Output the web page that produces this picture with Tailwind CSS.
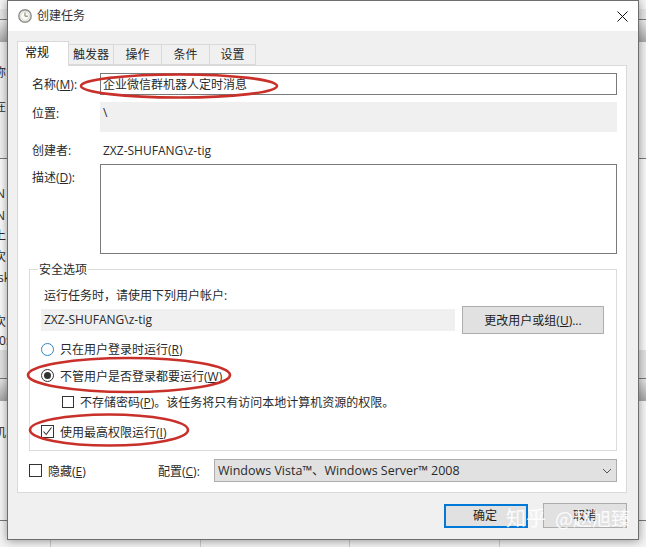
<!DOCTYPE html>
<html lang="zh">
<head>
<meta charset="utf-8">
<title>创建任务</title>
<script src="https://cdn.jsdelivr.net/npm/@tailwindcss/browser@4"></script>
</head>
<body class="m-0 bg-[#f0f0f0]">
<div class="relative w-[646px] h-[547px] overflow-hidden font-['Open_Sans','Noto_Sans_CJK_SC',sans-serif] text-[12px] text-[#2a2a2a]">

  <!-- window behind the dialog -->
  <div class="flex flex-col h-[547px]">
    <div class="h-[9px] bg-[#f4f4f4]"></div>
    <div class="h-[10px] bg-[#e6e6e6]"></div>
    <div class="h-[23px] border-t border-[#777] bg-gradient-to-b from-[#eeeeee] to-[#a8a8a8]"></div>
    <div class="h-[116px] bg-[#f0f0f0] pt-[22px] leading-[18px] -indent-[6px]">
      <p>称</p>
      <p class="mt-[16px]">在</p>
    </div>
    <div class="h-[192px] border-t border-[#777] bg-[#fafafa] pt-[26px] leading-[18px] -indent-[4px]">
      <p>N</p>
      <p class="mt-[4px]">N</p>
      <p class="mt-[2px] -indent-[6px]">上</p>
      <p class="mt-[3px] -indent-[6px]">次</p>
      <p class="mt-[3px] -indent-[2px]">sk</p>
      <p class="mt-[26px] -indent-[6px]">次</p>
      <p class="mt-[1px] -indent-[1px]">0:</p>
    </div>
    <div class="h-[28px] bg-[#e2e2e2]"></div>
    <div class="h-[23px] border-t border-[#777] bg-gradient-to-b from-[#e6e6e6] to-[#a5a5a5]"></div>
    <div class="h-[119px] bg-[#f6f6f6] pt-[23px] leading-[18px] -indent-[6px]">
      <p>机</p>
    </div>
    <div class="flex-1 border-t border-[#777] bg-[#f4f4f4] flex">
      <div class="w-[50px]"></div>
      <div class="w-[150px] border-l border-[#ccc]"></div>
      <div class="w-[149px] border-l border-[#ccc]"></div>
      <div class="w-[150px] border-l border-[#ccc]"></div>
      <div class="flex-1 border-l border-[#ccc]"></div>
    </div>
  </div>

  <!-- dialog -->
  <div class="absolute left-[7px] top-0 w-[632px] h-[540px] bg-[#f0f0f0] border border-[#6e6e6e] shadow-[0_1px_9px_rgba(0,0,0,0.4)]">

    <div class="h-[30px] bg-white flex items-center pl-[10px]">
      <svg class="w-[14px] h-[14px]" viewBox="0 0 14 14">
        <circle cx="7" cy="7" r="6.2" fill="#eef0ee" stroke="#8d8f8c" stroke-width="1.4"/>
        <circle cx="7" cy="7" r="4.3" fill="#fbfbf4" stroke="#c9c9bd" stroke-width=".6"/>
        <path d="M7 3.6V7.2H10" fill="none" stroke="#6f7f6c" stroke-width="1"/>
      </svg>
      <span class="ml-[5px] text-[#333]">创建任务</span>
      <svg class="ml-auto mr-[10px] w-[11px] h-[11px]" viewBox="0 0 11 11">
        <path d="M.5.5l10 10M10.5.5l-10 10" stroke="#111" stroke-width="1"/>
      </svg>
    </div>

    <!-- tabs -->
    <div class="flex items-end h-[34px] pl-[9px] relative z-10">
      <div class="w-[52px] h-[25px] -mb-px bg-white border border-b-0 border-[#d9d9d9] pl-[7px] leading-[22px] text-[#111]">常规</div>
      <div class="w-[45px] h-[21px] border-y border-r border-[#d9d9d9] text-center leading-[20px]">触发器</div>
      <div class="w-[48px] h-[21px] border-y border-r border-[#d9d9d9] text-center leading-[20px]">操作</div>
      <div class="w-[48px] h-[21px] border-y border-r border-[#d9d9d9] text-center leading-[20px]">条件</div>
      <div class="w-[46px] h-[21px] border-y border-r border-[#d9d9d9] text-center leading-[20px]">设置</div>
    </div>

    <!-- panel -->
    <div class="ml-[9px] w-[610px] h-[428px] bg-white border border-[#d9d9d9] pl-[11px] pt-[7px]">
      <div class="flex items-center pl-[3px]">
        <label class="w-[68px] pt-[2px]">名称(<u>M</u>):</label>
        <div class="w-[517px] h-[22px] border border-[#7a7a7a] pl-[2px] leading-[22px]">企业微信群机器人定时消息</div>
      </div>
      <div class="flex items-start pl-[3px] mt-[7px]">
        <label class="w-[68px] leading-[24px]">位置:</label>
        <div class="w-[517px] h-[30px] bg-[#f0f0f0] pl-[3px] leading-[22px]">\</div>
      </div>
      <div class="flex items-center pl-[3px] mt-[8px] h-[20px]">
        <label class="w-[71px] pt-[2px]">创建者:</label>
        <span class="pt-[2px]">ZXZ-SHUFANG\z-tig</span>
      </div>
      <div class="flex items-start pl-[3px] mt-[4px]">
        <label class="w-[68px] leading-[28px]">描述(<u>D</u>):</label>
        <div class="w-[517px] h-[90px] bg-white border border-[#7a7a7a]"></div>
      </div>

      <!-- security options -->
      <div class="mt-[15px] w-[588px] h-[182px] border border-[#dcdcdc] pl-[11px]">
        <div class="-mt-[9px] -ml-[3px] w-fit bg-white px-[1px] leading-[18px]">安全选项</div>
        <p class="mt-[8px] pl-[3px] leading-[18px]">运行任务时，请使用下列用户帐户:</p>
        <div class="mt-[1px] flex items-center h-[28px]">
          <div class="w-[414px] h-[22px] bg-[#f0f0f0] pl-[3px] leading-[21px]">ZXZ-SHUFANG\z-tig</div>
          <button class="ml-[7px] w-[142px] h-[28px] pt-[2px] bg-[#e1e1e1] border border-[#adadad] text-[#222]">更改用户或组(<u>U</u>)...</button>
        </div>
        <div class="mt-[6px] flex items-center h-[18px]">
          <span class="w-[13px] h-[13px] rounded-full border border-[#2f86c0] bg-white"></span>
          <span class="ml-[6px] pt-[2px]">只在用户登录时运行(<u>R</u>)</span>
        </div>
        <div class="mt-[8px] flex items-center h-[18px]">
          <span class="w-[13px] h-[13px] rounded-full border border-[#333] bg-white flex items-center justify-center">
            <span class="w-[7px] h-[7px] rounded-full bg-[#333]"></span>
          </span>
          <span class="ml-[6px] pt-[3px]">不管用户是否登录都要运行(<u>W</u>)</span>
        </div>
        <div class="mt-[9px] ml-[21px] flex items-center h-[18px]">
          <span class="w-[12px] h-[12px] border border-[#333] bg-white"></span>
          <span class="ml-[6px] pt-[2px]">不存储密码(<u>P</u>)。该任务将只有访问本地计算机资源的权限。</span>
        </div>
        <div class="mt-[11px] flex items-center h-[18px]">
          <span class="w-[13px] h-[13px] border border-[#333] bg-white flex items-center justify-center">
            <svg class="w-[11px] h-[11px]" viewBox="0 0 11 11"><path d="M1.5 5.5l2.7 3 5.3-7" fill="none" stroke="#333" stroke-width="1.1"/></svg>
          </span>
          <span class="ml-[6px] pt-[3px]">使用最高权限运行(<u>I</u>)</span>
        </div>
      </div>

      <!-- hidden + configure -->
      <div class="mt-[8px] flex items-center h-[23px]">
        <div class="w-[129px] flex items-center">
          <span class="w-[13px] h-[13px] border border-[#333] bg-white"></span>
          <span class="ml-[6px] pt-[2px]">隐藏(<u>E</u>)</span>
        </div>
        <label class="w-[56px] pt-[2px]">配置(<u>C</u>):</label>
        <div class="w-[403px] h-[23px] bg-[#e1e1e1] border border-[#adadad] flex items-center pl-[3px] pr-[4px] text-[12.5px]">
          <span class="pt-[2px]">Windows Vista™、Windows Server™ 2008</span>
          <svg class="ml-auto w-[10px] h-[6px]" viewBox="0 0 10 6"><path d="M1 1l4 4 4-4" fill="none" stroke="#555" stroke-width="1"/></svg>
        </div>
      </div>
    </div>

    <!-- footer buttons -->
    <div class="mt-[10px] pr-[11px] flex justify-end items-end gap-[15px]">
      <button class="w-[84px] h-[24px] bg-[#e1e1e1] border-2 border-[#0078d7] text-[#222] pr-[2px]">确定</button>
      <button class="w-[84px] h-[25px] bg-[#e1e1e1] border border-[#adadad] text-[#222]">取消</button>
    </div>
  </div>

  <!-- red annotation circles -->
  <svg class="absolute inset-0 w-[646px] h-[547px] pointer-events-none" viewBox="0 0 646 547" fill="none" stroke="#c9302a" stroke-width="2.6">
    <ellipse cx="179" cy="86" rx="98" ry="11.5"/>
    <ellipse cx="129" cy="375" rx="101" ry="17"/>
    <ellipse cx="109" cy="430" rx="79" ry="15.5"/>
  </svg>

  <!-- watermark -->
  <div class="absolute left-[506px] top-[505px] text-[20px] leading-[26px] text-white/85 whitespace-nowrap font-['Noto_Sans_CJK_SC',sans-serif]">知乎<span class="text-[19px] ml-[9px]">@赵旭臻</span></div>
</div>
</body>
</html>
